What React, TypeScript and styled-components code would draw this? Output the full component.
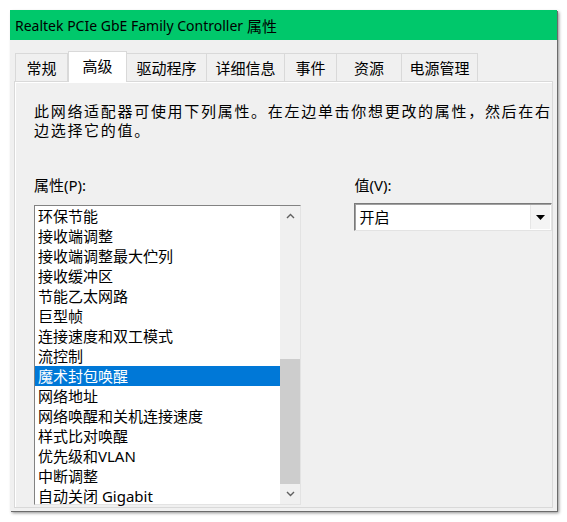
import styled, { createGlobalStyle } from 'styled-components'

const GlobalStyle = createGlobalStyle`
   html, body {
      margin: 0;
      padding: 0;
      background: #ffffff;
   }
   body {
      font-family: "Noto Sans", "Noto Sans CJK SC", sans-serif;
      font-size: 15px;
      color: #000;
   }
`

const tabs = [
   { label: '常规', width: 53 },
   { label: '高级', width: 59 },
   { label: '驱动程序', width: 80 },
   { label: '详细信息', width: 78 },
   { label: '事件', width: 52 },
   { label: '资源', width: 65 },
   { label: '电源管理', width: 76 },
]

const properties = [
   '环保节能',
   '接收端调整',
   '接收端调整最大伫列',
   '接收缓冲区',
   '节能乙太网路',
   '巨型帧',
   '连接速度和双工模式',
   '流控制',
   '魔术封包唤醒',
   '网络地址',
   '网络唤醒和关机连接速度',
   '样式比对唤醒',
   '优先级和VLAN',
   '中断调整',
   '自动关闭 Gigabit',
]

const Page = styled.div`
   padding: 10px;
`

const Window = styled.div`
   width: 547px;
   height: 501px;
   display: flex;
   flex-direction: column;
   background: #f0f0f0;
   box-shadow: 1px 1px 0 #6b6b6b, 2px 2px 3px rgba(0, 0, 0, 0.45);
`

const TitleBar = styled.div`
   height: 30px;
   flex: none;
   display: flex;
   align-items: center;
   padding-left: 5px;
   background: #00c86b;
   font-size: 14px;
   white-space: nowrap;
`

const TitleCjk = styled.span`
   font-size: 15px;
   margin-left: 4px;
`

const Body = styled.div`
   flex: 1;
   display: flex;
   flex-direction: column;
   padding: 12px 4px 3px 4px;
`

const TabStrip = styled.div`
   display: flex;
   padding-left: 1px;
   height: 29px;
   align-items: flex-end;
   position: relative;
   z-index: 1;
`

const Tab = styled.div<{ $width: number; $active?: boolean }>`
   width: ${(p) => p.$width}px;
   box-sizing: border-box;
   height: ${(p) => (p.$active ? 31 : 28)}px;
   margin-bottom: ${(p) => (p.$active ? -1 : 0)}px;
   display: flex;
   align-items: center;
   justify-content: center;
   padding-bottom: ${(p) => (p.$active ? 4 : 0)}px;
   background: ${(p) => (p.$active ? '#ffffff' : '#f0f0f0')};
   border: 1px solid #d9d9d9;
   border-bottom: none;
   border-left-width: ${(p) => (p.$active ? 1 : 0)}px;
   &:first-child {
      border-left-width: 1px;
   }
   white-space: nowrap;
`

const Panel = styled.div`
   flex: 1;
   display: flex;
   flex-direction: column;
   padding: 20px 0 0 19px;
   background: #f0f0f0;
   border: 1px solid #d9d9d9;
   box-shadow: inset 1px 1px 0 #ffffff;
`

const Description = styled.p`
   margin: 0;
   width: 518px;
   line-height: 19px;
   letter-spacing: 1.7px;
`

const Columns = styled.div`
   display: flex;
   gap: 53px;
   margin-top: 36px;
`

const Column = styled.div<{ $width: number; $gap: number }>`
   width: ${(p) => p.$width}px;
   display: flex;
   flex-direction: column;
   gap: ${(p) => p.$gap}px;
`

const Label = styled.div`
   line-height: 19px;
`

const ListBox = styled.div`
   height: 300px;
   box-sizing: border-box;
   display: flex;
   background: #ffffff;
   border: 1px solid;
   border-color: #828282 #e3e3e3 #e3e3e3 #828282;
`

const Items = styled.div`
   flex: 1;
   display: flex;
   flex-direction: column;
`

const Item = styled.div<{ $selected?: boolean }>`
   height: 20px;
   line-height: 20px;
   padding-left: 3px;
   white-space: nowrap;
   background: ${(p) => (p.$selected ? '#0078d7' : 'transparent')};
   color: ${(p) => (p.$selected ? '#ffffff' : '#000000')};
`

const ScrollBar = styled.div`
   width: 20px;
   display: flex;
   flex-direction: column;
   background: #f0f0f0;
`

const ArrowButton = styled.div`
   height: 20px;
   flex: none;
   display: flex;
   align-items: center;
   justify-content: center;
`

const Track = styled.div`
   flex: 1;
   display: flex;
   flex-direction: column;
`

const Thumb = styled.div<{ $offset: number; $size: number }>`
   margin-top: ${(p) => p.$offset}px;
   height: ${(p) => p.$size}px;
   background: #cdcdcd;
`

const ComboBox = styled.div`
   height: 28px;
   box-sizing: border-box;
   display: flex;
   align-items: center;
   background: #ffffff;
   border: 1px solid;
   border-color: #7a7a7a #e3e3e3 #e3e3e3 #7a7a7a;
   box-shadow: inset 1px 1px 0 #a0a0a0;
`

const ComboValue = styled.div`
   flex: 1;
   padding-left: 4px;
   line-height: 20px;
`

const ComboButton = styled.div`
   width: 19px;
   height: 24px;
   margin-right: 1px;
   display: flex;
   align-items: center;
   justify-content: center;
   background: #f4f4f4;
   border-left: 1px solid #e6e6e6;
`

const Chevron = ({ up }: { up?: boolean }) => (
   <svg width="9" height="6" viewBox="0 0 9 6">
      <polyline
         points={up ? '1,5 4.5,1.5 8,5' : '1,1 4.5,4.5 8,1'}
         fill="none"
         stroke="#606060"
         strokeWidth="1.4"
      />
   </svg>
)

const App = () => {
   const selected = 8
   return (
      <>
         <GlobalStyle />
         <Page>
            <Window>
               <TitleBar>
                  Realtek PCIe GbE Family Controller<TitleCjk>属性</TitleCjk>
               </TitleBar>
               <Body>
                  <TabStrip>
                     {tabs.map((t, i) => (
                        <Tab key={t.label} $width={t.width} $active={i === 1}>
                           {t.label}
                        </Tab>
                     ))}
                  </TabStrip>
                  <Panel>
                     <Description>
                        此网络适配器可使用下列属性。在左边单击你想更改的属性，然后在右边选择它的值。
                     </Description>
                     <Columns>
                        <Column $width={268} $gap={10}>
                           <Label>属性(P):</Label>
                           <ListBox>
                              <Items>
                                 {properties.map((name, i) => (
                                    <Item key={name} $selected={i === selected}>
                                       {name}
                                    </Item>
                                 ))}
                              </Items>
                              <ScrollBar>
                                 <ArrowButton>
                                    <Chevron up />
                                 </ArrowButton>
                                 <Track>
                                    <Thumb $offset={133} $size={125} />
                                 </Track>
                                 <ArrowButton>
                                    <Chevron />
                                 </ArrowButton>
                              </ScrollBar>
                           </ListBox>
                        </Column>
                        <Column $width={198} $gap={8}>
                           <Label>值(V):</Label>
                           <ComboBox>
                              <ComboValue>开启</ComboValue>
                              <ComboButton>
                                 <svg width="9" height="5" viewBox="0 0 9 5">
                                    <polygon points="0,0 9,0 4.5,5" fill="#000" />
                                 </svg>
                              </ComboButton>
                           </ComboBox>
                        </Column>
                     </Columns>
                  </Panel>
               </Body>
            </Window>
         </Page>
      </>
   )
}

export default App
